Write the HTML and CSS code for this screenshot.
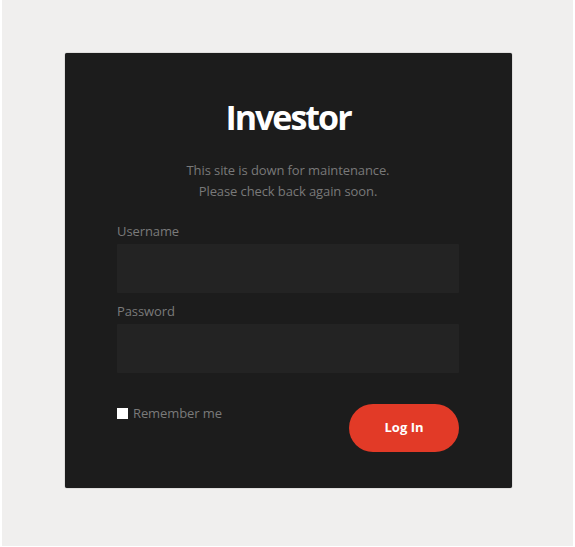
FILE: index.html
```html
<!DOCTYPE html>
<html lang="en">
<head>
<meta charset="utf-8">
<title>Investor</title>
<link rel="stylesheet" href="styles.css">
</head>
<body>
<div class="page">
  <div class="card">
    <h1 class="title">Investor</h1>
    <p class="notice">This site is down for maintenance.<br>Please check back again soon.</p>
    <form class="form">
      <label class="label" for="user">Username</label>
      <input class="field" id="user" type="text">
      <label class="label label-pass" for="pass">Password</label>
      <input class="field" id="pass" type="password">
      <div class="actions">
        <label class="remember"><input class="check" type="checkbox"><span>Remember me</span></label>
        <button class="btn" type="button">Log In</button>
      </div>
    </form>
  </div>
</div>
</body>
</html>
```
FILE: styles.css
```css
html, body {
  margin: 0;
  padding: 0;
  background: #ffffff;
}
body {
  font-family: "Open Sans", "Liberation Sans", sans-serif;
  font-size: 13px;
}
.page {
  margin: 0 2px;
  height: 546px;
  background: #f0efee;
  padding: 53px 0 0 63px;
  box-sizing: border-box;
}
.card {
  width: 447px;
  box-sizing: border-box;
  padding: 41px 53px 36px 52px;
  background: #1c1c1c;
  border-radius: 2px;
  box-shadow: 0 0 1px 0 rgba(0, 0, 0, 0.7);
}
.title {
  margin: 0;
  text-align: center;
  color: #ffffff;
  font-size: 34px;
  font-weight: 700;
  letter-spacing: -2px;
  line-height: 46px;
}
.notice {
  margin: 20px 0 0;
  text-align: center;
  color: #797979;
  font-size: 13px;
  line-height: 21px;
  letter-spacing: -0.1px;
}
.form {
  display: flex;
  flex-direction: column;
  margin-top: 20px;
}
.label {
  color: #7a7a7a;
  font-size: 13px;
  line-height: 18px;
  margin-bottom: 4px;
  letter-spacing: -0.1px;
}
.label-pass {
  margin-top: 9px;
}
.field {
  height: 49px;
  box-sizing: border-box;
  border: none;
  margin: 0;
  background: #232323;
  border-radius: 1px;
  outline: none;
}
.actions {
  display: flex;
  justify-content: space-between;
  align-items: flex-start;
  margin-top: 31px;
}
.remember {
  display: flex;
  align-items: center;
  gap: 5px;
  color: #7a7a7a;
  font-size: 13px;
  line-height: 18px;
  letter-spacing: -0.1px;
}
.check {
  appearance: none;
  -webkit-appearance: none;
  width: 11px;
  height: 11px;
  margin: 1px 0 0;
  background: #ffffff;
  border: none;
  border-radius: 0;
}
.btn {
  width: 110px;
  height: 48px;
  border: none;
  border-radius: 24px;
  background: #e23a27;
  color: #ffffff;
  font-family: "Open Sans", "Liberation Sans", sans-serif;
  font-size: 13px;
  font-weight: 700;
  padding: 0 0 2px;
}
```
